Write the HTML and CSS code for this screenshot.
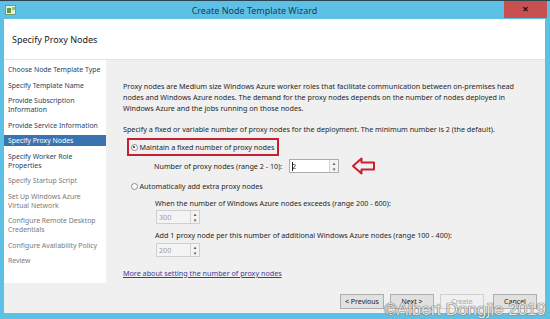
FILE: index.html
```html
<!DOCTYPE html>
<html lang="en">
<head>
  <meta charset="UTF-8">
  <title>Create Node Template Wizard</title>
  <link rel="stylesheet" href="styles.css">
</head>
<body>
  <div class="window">
    <!-- Title bar -->
    <div class="titlebar">
      <svg class="app-icon" width="12" height="12" viewBox="0 0 12 12">
        <rect x="0.5" y="1.5" width="10" height="9" fill="#e8f0e0" stroke="#7a9a70"/>
        <rect x="2" y="4" width="4" height="5" fill="#5a9a40"/>
        <rect x="7" y="3" width="3" height="3" fill="#9ac070"/>
      </svg>
      <div class="title">Create Node Template Wizard</div>
      <div class="close">&#215;</div>
    </div>

    <div class="frame">
      <!-- Page header -->
      <div class="header">Specify Proxy Nodes</div>

      <div class="main">
        <!-- Steps -->
        <ul class="steps">
          <li class="done">Choose Node Template Type</li>
          <li class="done">Specify Template Name</li>
          <li class="done">Provide Subscription<br>Information</li>
          <li class="done">Provide Service Information</li>
          <li class="current">Specify Proxy Nodes</li>
          <li class="done">Specify Worker Role<br>Properties</li>
          <li>Specify Startup Script</li>
          <li>Set Up Windows Azure<br>Virtual Network</li>
          <li>Configure Remote Desktop<br>Credentials</li>
          <li>Configure Availability Policy</li>
          <li>Review</li>
        </ul>

        <!-- Page content -->
        <div class="content">
          <p class="intro">Proxy nodes are Medium size Windows Azure worker roles that facilitate communication between on-premises head<br>nodes and Windows Azure nodes. The demand for the proxy nodes depends on the number of nodes deployed in<br>Windows Azure and the jobs running on those nodes.</p>
          <p class="intro last">Specify a fixed or variable number of proxy nodes for the deployment. The minimum number is 2 (the default).</p>

          <div class="option highlighted">
            <span class="radio checked"></span>
            <span>Maintain a fixed number of proxy nodes</span>
          </div>
          <div class="field-row">
            <span class="field-label">Number of proxy nodes (range 2 - 10):</span>
            <div class="spin wide">
              <span class="value"><span class="caret"></span>2</span>
              <span class="arrows"><i>&#9652;</i><i>&#9662;</i></span>
            </div>
            <svg class="callout" width="25" height="18" viewBox="0 0 25 18">
              <path d="M2 9 L10.5 1.5 L10.5 5.5 L23 5.5 L23 12.5 L10.5 12.5 L10.5 16.5 Z" fill="none" stroke="#c8202c" stroke-width="2" stroke-linejoin="round"/>
            </svg>
          </div>

          <div class="option">
            <span class="radio"></span>
            <span>Automatically add extra proxy nodes</span>
          </div>
          <div class="sub">
            <div class="sub-label">When the number of Windows Azure nodes exceeds (range 200 - 600):</div>
            <div class="spin disabled">
              <span class="value">300</span>
              <span class="arrows"><i>&#9652;</i><i>&#9662;</i></span>
            </div>
            <div class="sub-label second">Add 1 proxy node per this number of additional Windows Azure nodes (range 100 - 400):</div>
            <div class="spin disabled">
              <span class="value">200</span>
              <span class="arrows"><i>&#9652;</i><i>&#9662;</i></span>
            </div>
          </div>

          <a class="more" href="#">More about setting the number of proxy nodes</a>
        </div>
      </div>

      <!-- Buttons -->
      <div class="footer">
        <button class="btn">&lt; Previous</button>
        <button class="btn">Next &gt;</button>
        <button class="btn" disabled>Create</button>
        <button class="btn cancel">Cancel</button>
      </div>
    </div>

    <div class="watermark">&copy;Albert Dongjie 2019</div>
  </div>
</body>
</html>
```

FILE: styles.css
```css
/* Page */
body {
  margin: 0;
  background: #3a3f45;
  font-family: "Noto Sans", "DejaVu Sans", sans-serif;
}

.window {
  width: 550px;
  height: 319px;
  background: #5dc1e6;
  display: flex;
  flex-direction: column;
  box-sizing: border-box;
  border-top: 1px solid #2c4450;
  position: relative;
  overflow: hidden;
}

/* Title bar */
.titlebar {
  height: 18px;
  display: flex;
  align-items: center;
}

.app-icon {
  margin-left: 5px;
}

.title {
  flex: 1;
  text-align: center;
  font-size: 9px;
  color: #1e3a55;
  margin-left: -12px;
}

.close {
  width: 43px;
  height: 17px;
  margin-right: 3px;
  margin-top: -1px;
  background: #c75050;
  color: #2a0a0a;
  font-size: 11px;
  font-weight: bold;
  text-align: center;
  line-height: 16px;
}

/* Frame */
.frame {
  flex: 1;
  margin: 0 5px 6px 4px;
  display: flex;
  flex-direction: column;
  background: #f0f0f0;
  min-height: 0;
}

.header {
  height: 41px;
  flex-shrink: 0;
  background: #ffffff;
  border-bottom: 1px solid #e4e4e4;
  box-sizing: border-box;
  padding: 15px 0 0 8px;
  font-size: 9px;
  line-height: 12px;
  color: #1a1a1a;
}

.main {
  flex: 1;
  display: flex;
  min-height: 0;
}

/* Steps */
.steps {
  width: 102px;
  flex-shrink: 0;
  margin: 0;
  padding: 4px 0 0 0;
  list-style: none;
  background: #ffffff;
  font-size: 6.9px;
  line-height: 9px;
}

.steps li {
  padding: 1px 4px;
  margin-bottom: 4.5px;
  color: #7a7a7a;
  white-space: nowrap;
}

.steps li.done {
  color: #2a3f5e;
}

.steps li.current {
  background: #3a74b0;
  color: #ffffff;
}

/* Content */
.content {
  flex: 1;
  min-width: 0;
  padding: 21px 6px 0 17px;
  font-size: 7.2px;
  line-height: 11px;
  color: #262626;
}

.intro {
  margin: 0 0 10px 0;
  white-space: nowrap;
}

.intro.last {
  margin-bottom: 3px;
}

.option {
  display: flex;
  width: fit-content;
  align-items: center;
  gap: 2px;
  height: 14px;
  padding: 0 3px 0 1.5px;
  margin-left: 4px;
  border: 2px solid transparent;
}

.option.highlighted {
  border-color: #c42032;
}

.radio {
  width: 7px;
  height: 7px;
  border-radius: 50%;
  border: 1px solid #8a8a8a;
  background: #fff;
  box-sizing: border-box;
  position: relative;
}

.radio.checked::after {
  content: "";
  position: absolute;
  left: 1.5px;
  top: 1.5px;
  width: 2px;
  height: 2px;
  border-radius: 50%;
  background: #222;
}

.field-row {
  display: flex;
  align-items: center;
  gap: 5px;
  margin: 1px 0 2px 31px;
}

.field-label {
  width: 130px;
}

.spin {
  width: 44px;
  height: 14px;
  border: 1px solid #abadb3;
  background: #fff;
  display: flex;
  box-sizing: border-box;
}

.spin.wide {
  width: 50px;
}

.spin .value {
  flex: 1;
  padding-left: 2px;
  line-height: 12px;
  display: flex;
  align-items: center;
}

.caret {
  width: 1px;
  height: 9px;
  background: #222;
  margin-right: -1px;
}

.spin .arrows {
  width: 8px;
  display: flex;
  flex-direction: column;
  border-left: 1px solid #d4d4d4;
}

.spin .arrows i {
  flex: 1;
  font-style: normal;
  font-size: 5px;
  line-height: 6px;
  text-align: center;
  color: #555;
  background: #f4f4f4;
}

.spin.disabled {
  background: #f4f4f4;
  border-color: #cfcfcf;
  color: #9a9a9a;
}

.callout {
  margin-left: 7px;
}

.sub {
  margin: 0 0 0 33px;
}

.sub-label {
  margin: 2.5px 0 1.5px -1px;
}

.sub-label.second {
  margin-top: 5.5px;
  margin-bottom: 2.5px;
}

.more {
  display: inline-block;
  margin-top: 10.5px;
  color: #3c3c9a;
}

/* Footer */
.footer {
  height: 30px;
  flex-shrink: 0;
  display: flex;
  align-items: flex-end;
  justify-content: flex-end;
  gap: 6px;
  padding: 0 8px 4px 0;
  box-sizing: border-box;
}

.btn {
  width: 44px;
  height: 15px;
  padding: 0;
  font-family: inherit;
  font-size: 7px;
  background: #e1e1e1;
  border: 1px solid #adadad;
  color: #222;
}

.btn:disabled {
  background: #f0f0f0;
  border-color: #d0d0d0;
  color: #a8a8a8;
}

.cancel {
  margin-left: 3px;
}

/* Watermark over the bottom right corner */
.watermark {
  position: absolute;
  right: 4px;
  bottom: 1px;
  font-family: "Liberation Sans", sans-serif;
  font-size: 17px;
  line-height: 17px;
  color: rgba(255, 255, 255, 0.85);
  text-shadow: 0 0 1px #555, 0 0 1px #555;
}
```
